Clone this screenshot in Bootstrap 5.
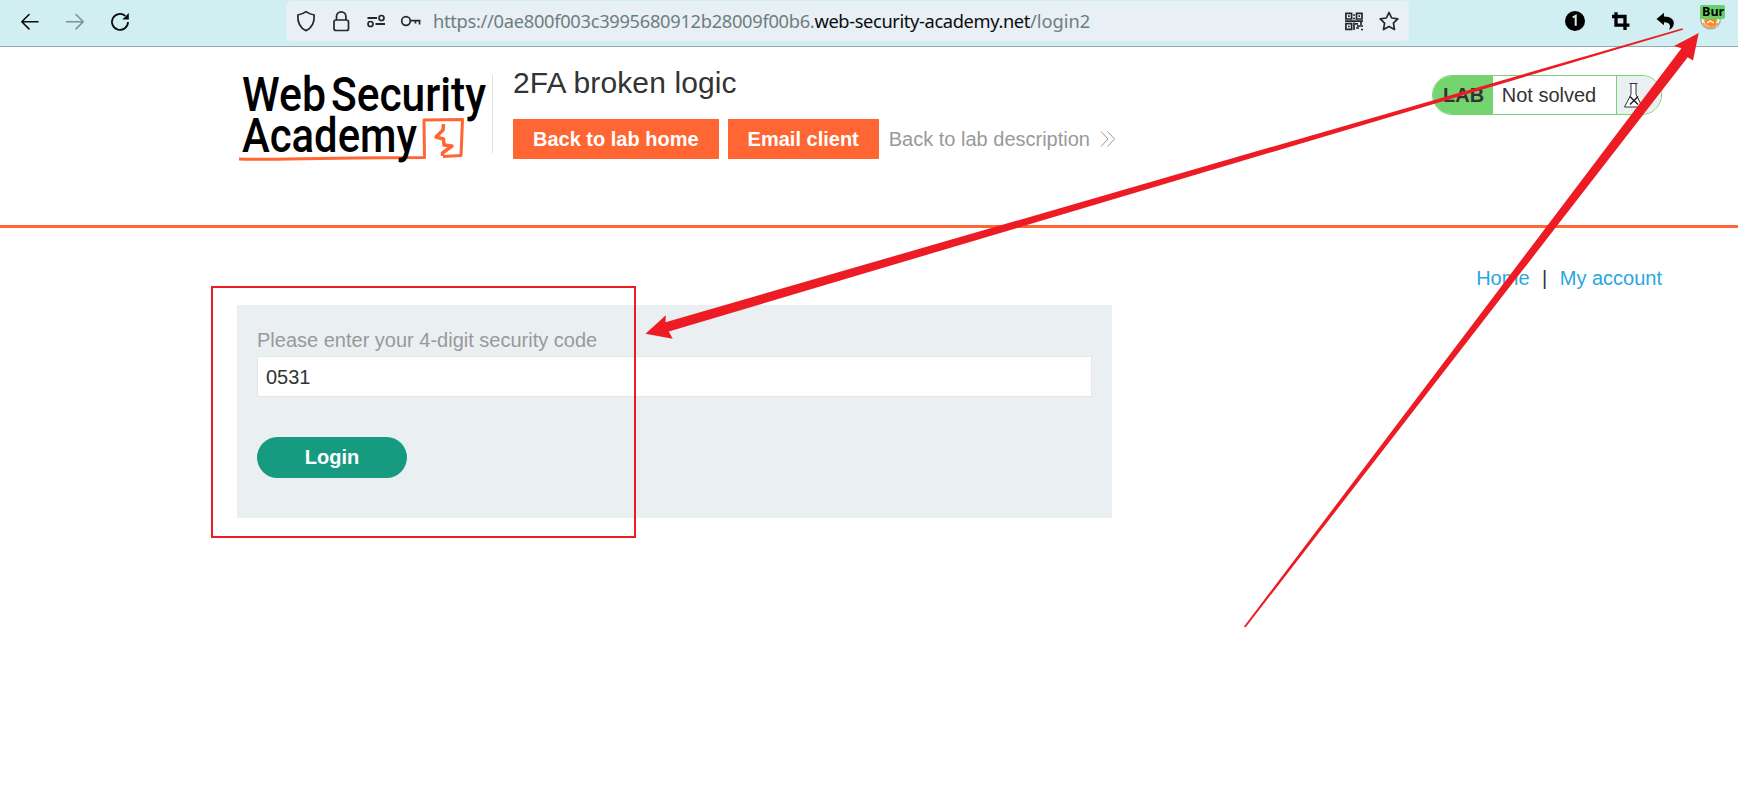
<!DOCTYPE html>
<html lang="en">
<head>
<meta charset="utf-8">
<title>2FA broken logic</title>
<link href="https://cdn.jsdelivr.net/npm/bootstrap@5.3.0/dist/css/bootstrap.min.css" rel="stylesheet">
<style>
body{font:20px/23px "Liberation Sans",Arial,sans-serif;color:#333;background:#fff;width:1738px;height:812px;overflow:hidden}
.browser-bar{height:47px;background:#d1eff2;border-bottom:1px solid #95aaae}
.nav-tools{width:286px;padding-left:20px;gap:25px}
.address{width:1123px;height:40px;margin-top:1px;background:#e8eff5;border-radius:5px;padding:0 9px 0 10px}
.url{font:18.3px/40px "Noto Sans",sans-serif;color:#6d7e80;white-space:pre;margin-left:11px}
.url b{font-weight:400;color:#080c0d}
.u1{letter-spacing:-.3px}
.u2{letter-spacing:-.38px}
.lab-header{height:181px;padding:28px 76px 0 237px;border-bottom:3px solid #f63}
.logo{margin-top:-20px}
.rule{width:1px;height:78px;background:#e0e0e0}
.lab-title{font-size:30px;line-height:34px;letter-spacing:.12px;margin:-9px 0 0}
.lab-actions{margin-top:19px}
.btn-lab{border:0;border-radius:0;font-size:20px;font-weight:700;line-height:40px;height:40px;padding:0 20px;background:#f63;color:#fff}
.back{color:#999;text-decoration:none;line-height:40px;margin-left:10px}
.lab-pill{width:230px;height:40px;border:1px solid #74d46f;border-radius:20px;overflow:hidden;background:#fff;line-height:39px}
.pill-name{width:60px;background:#74d46f;font-weight:700;padding-left:10px}
.pill-state{width:125px;padding-left:9px;border-right:1px solid #74d46f}
.top-links{padding:39px 76px 0 0;height:77px}
.top-links a{color:#29a7df;text-decoration:none}
.login-box{width:875px;height:213px;margin-left:237px;background:#eaeff2;padding:24px 20px 0}
.login-box label{color:#999;display:block;height:27px;line-height:23px}
.code-field{height:41px;border:1px solid #e4e6e6;border-radius:0;font-size:20px;color:#333;padding:1px 8px 0}
.btn-login{width:150px;height:41px;margin-top:40px;background:#179b80;color:#fff;font-size:20px;font-weight:700;padding:0 0 2px;border:0}
.extensions{margin-right:20px}
.burp{width:26px;height:30px;margin-top:5px;margin-right:12px}
.burp span{left:0;top:0;width:25px;height:14px;background:#65cf69;border-radius:2px;color:#000;font:700 12.5px/13px "Open Sans",sans-serif;padding-left:2px}
.notes{left:0;top:0;pointer-events:none}
svg{display:block;flex-shrink:0}
</style>
</head>
<body class="position-relative">
<nav class="browser-bar d-flex">
  <div class="nav-tools d-flex align-items-start pt-2">
    <svg class="mt-1" width="20" height="20" fill="none" stroke="#080c0d" stroke-width="1.6" stroke-linecap="round" stroke-linejoin="round"><path d="M18 9.7H2M9 2.5 1.8 9.7 9 16.9"/></svg>
    <svg class="mt-1" width="20" height="20" fill="none" stroke="#7f9094" stroke-width="1.6" stroke-linecap="round" stroke-linejoin="round"><path d="M1.5 9.7H18M11 2.5 18.2 9.7 11 16.9"/></svg>
    <svg class="mt-1" width="22" height="20" fill="none" stroke="#080c0d" stroke-width="1.8"><path d="M18 10A8 8 0 1 1 15.300 3.900"/><path d="M18.800 1V7.400H12.400Z" fill="#080c0d" stroke="none"/></svg>
  </div>
  <div class="address d-flex">
    <svg width="126" height="40" fill="none" stroke="#20292b" stroke-width="1.7" stroke-linejoin="round">
      <path d="M10 10.700C13 13 15.500 13.500 18.200 14C18.500 21 16 27 10 29.600C4 27 1.500 21 1.800 14C4.500 13.500 7 13 10 10.700Z"/>
      <rect x="38" y="19" width="14.500" height="10.500" rx="2"/><path d="M40.500 19V15.500A4.700 4.700 0 0 1 49.900 15.500V19"/>
      <path d="M71.500 17H81M79.500 23H89" stroke-width="1.8"/><circle cx="85.500" cy="17" r="2.500"/><circle cx="74.500" cy="23" r="2.500"/>
      <circle cx="110" cy="20" r="4.300"/><path d="M114.500 19.700H124.500M123.500 20V23.500M119.500 20V22.500"/>
    </svg>
    <div class="url"><span class="u1">https://0ae800f003c3995680912b28009f00b6.</span><b class="u2">web-security-academy.net</b><span>/login2</span></div>
    <svg class="ms-auto" width="56" height="40" fill="none" stroke="#20292b" stroke-width="1.700">
      <path d="M1.900 12.300H7.600V18H1.900ZM12.500 12.300H18V18H12.500ZM1.900 22.700H7.600V28.300H1.900ZM4 15.100H5.700M14.500 15.100H16.100M4 25.500H5.700M9.100 14H11M9.100 17.500H11M1 20.200H19M10 21.500V29M11 22.900H14M15 25H19M12 27H15M17 28.500H19M14 24V26M17 21V24"/>
      <path d="M45 11.500 47.700 17 53.800 17.900 49.400 22.200 50.500 28.500 45 25.500 39.500 28.500 40.600 22.200 36.200 17.900 42.300 17Z" stroke-linejoin="round"/>
    </svg>
  </div>
  <div class="d-flex ms-auto">
    <svg class="extensions" width="116" height="47"><circle cx="11" cy="21" r="10"/><path d="m8.700 17.500 3-1.800V25.800" fill="none" stroke="#d1eff2" stroke-width="2"/>
      <path d="M52 12.300V25.200H65.500M48 16.500H61V30" fill="none" stroke="#000" stroke-width="3.300"/>
      <path d="M92.500 19 100 12.800V16.600C107 16.600 110.300 20 109.800 24C109.300 27 107.500 29 105 29.800C107.500 25.500 105.500 22.200 100 22.200V25.200Z"/>
    </svg>
    <div class="burp position-relative">
      <svg width="26" height="26"><circle cx="10.500" cy="14" r="10.500" fill="#9da7aa"/><circle cx="10.500" cy="14" r="9.200" fill="#f6dfc8"/><path d="M4 13H17L16 20 11 22 5 19Z" fill="#f28c2c"/><path d="M2 15 5 21M16 22 19 15M7 18 10 16 14 18" fill="none" stroke="#fff" stroke-width="1.200"/><path d="M3 18A8.500 8.500 0 0 0 18 18" fill="none" stroke="#f49643" stroke-width="1.500"/></svg>
      <span class="position-absolute">Bur</span>
    </div>
  </div>
</nav>

<header class="lab-header d-flex align-items-start">
  <svg class="logo" width="255" height="120" viewBox="0 -20 255 120" font-family="Roboto, sans-serif" font-weight="500" font-size="48">
    <text x="5" y="36" textLength="84" lengthAdjust="spacingAndGlyphs">Web</text>
    <text x="94" y="36" textLength="155" lengthAdjust="spacingAndGlyphs">Security</text>
    <g fill="none" stroke="#f63" stroke-linejoin="round"><path d="M2 84C30 85 90 82.500 187.500 82.500L187 45 225.500 44.500 224 80.500 206 81.500" stroke-width="3"/><path d="M206.500 49 206 55 199 62 206.500 64 207 70 215 71 205.500 78V81" stroke-width="3.500"/></g>
    <text x="5" y="77" textLength="175" lengthAdjust="spacingAndGlyphs">Academy</text>
  </svg>
  <div class="rule"></div>
  <div class="ps-3 ms-1">
    <h1 class="lab-title fw-normal">2FA broken logic</h1>
    <div class="d-flex lab-actions">
      <a href="#" class="btn btn-lab">Back to lab home</a><a href="#" class="btn btn-lab" style="margin-left:9px">Email client</a>
      <a href="#" class="back d-flex">Back to lab description<svg width="18" height="40" style="margin-left:9px" fill="none" stroke="#999" stroke-width="1"><path d="M2 12.500 9 20 2 27.500M8.500 12.500 15.500 20 8.500 27.500"/></svg></a>
    </div>
  </div>
  <div class="lab-pill d-flex ms-auto">
    <div class="pill-name">LAB</div><div class="pill-state">Not solved</div>
    <svg width="44" height="38" style="background:#eaeff2"><path d="M12.500 7.500H20.500M14 8V18.500L7.500 31H25.500L19 18.500V8" fill="#fff" stroke="#333" stroke-width="1"/><path d="m13 20.500 8 8m0-8-8 8" stroke="#222" stroke-width="1.500"/></svg>
  </div>
</header>

<main>
  <div class="top-links d-flex justify-content-end"><a href="#">Home</a><span style="margin:0 12.5px">|</span><a href="#">My account</a></div>
  <form class="login-box">
    <label for="code">Please enter your 4-digit security code</label>
    <input id="code" class="form-control code-field" value="0531">
    <button type="button" class="btn btn-login rounded-pill">Login</button>
  </form>
</main>

<svg class="notes position-absolute" width="1738" height="812" fill="#ed1c24">
  <rect x="212" y="287" width="423" height="250" fill="none" stroke="#ed1c24" stroke-width="2"/>
  <path d="M645.500 333.700 665.800 315.300 665.500 322.200 1682.500 28.200 1683 29.800 668.800 331.600 672.700 338.800Z"/>
  <path d="M1698.700 33 1674 46 1681.500 48.300 1244 626.500 1245.500 627.500 1687.700 57.300 1693 60.500Z"/>
</svg>
<script src="https://cdn.jsdelivr.net/npm/bootstrap@5.3.0/dist/js/bootstrap.bundle.min.js"></script>
</body>
</html>
